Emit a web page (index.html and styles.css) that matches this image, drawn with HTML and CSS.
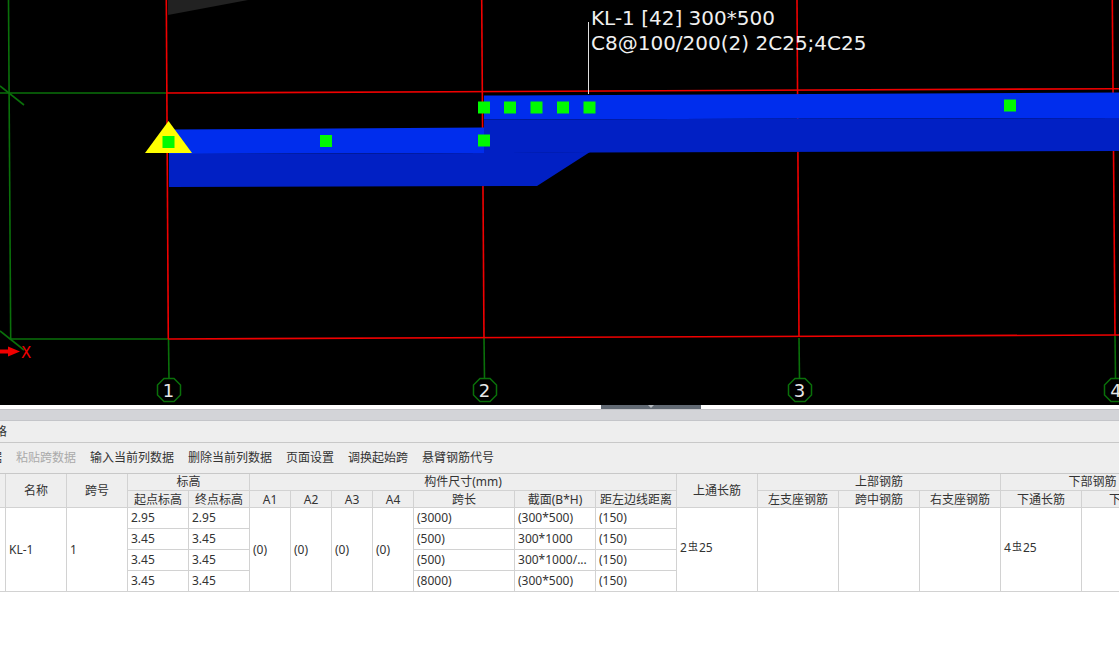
FILE: index.html
```html
<!DOCTYPE html>
<html lang="zh-CN">
<head>
<meta charset="utf-8">
<title>梁平法表格</title>
<link rel="stylesheet" href="styles.css">
</head>
<body>
<div class="page">
  <svg class="canvas" width="1119" height="405" viewBox="0 0 1119 405">
    <polygon class="shade" points="168,0 248,0 168,15"/>
    <g class="green">
      <line x1="8.500" y1="0" x2="10.700" y2="340"/>
      <line x1="0" y1="93" x2="167" y2="93"/>
      <line x1="0" y1="86" x2="24" y2="105"/>
      <line x1="0" y1="331" x2="24" y2="350"/>
      <line x1="10" y1="339" x2="168" y2="339"/>
      <line x1="168.500" y1="339" x2="169" y2="379"/>
      <line x1="484" y1="338" x2="484.500" y2="379"/>
      <line x1="799" y1="338" x2="799.500" y2="379"/>
      <line x1="1115" y1="335" x2="1115.500" y2="379"/>
      <polygon class="bubble" points="164,378.500 174,378.500 180.500,385 180.500,395 174,401.500 164,401.500 157.500,395 157.500,385"/>
      <polygon class="bubble" points="480,378.500 490,378.500 496.500,385 496.500,395 490,401.500 480,401.500 473.500,395 473.500,385"/>
      <polygon class="bubble" points="795,378.500 805,378.500 811.500,385 811.500,395 805,401.500 795,401.500 788.500,395 788.500,385"/>
      <polygon class="bubble" points="1111,378.500 1121,378.500 1127.500,385 1127.500,395 1121,401.500 1111,401.500 1104.500,395 1104.500,385"/>
    </g>
    <g class="red">
      <line x1="166.300" y1="0" x2="168.300" y2="339"/>
      <line x1="481.700" y1="0" x2="484" y2="338"/>
      <line x1="797" y1="0" x2="799" y2="337"/>
      <line x1="1112.300" y1="0" x2="1115" y2="335"/>
      <line x1="167" y1="93" x2="1119" y2="88.700"/>
      <line x1="168" y1="339" x2="1119" y2="335"/>
    </g>
    <polygon class="beam-top" points="169,129.500 484,127.500 484,153 169,154"/>
    <polygon class="beam-side" points="169,154 484,153 590,152 537,186 169,187"/>
    <polygon class="beam-top" points="484,95.500 1119,92.500 1119,118 484,119.500"/>
    <polygon class="beam-side" points="484,119.500 1119,118 1119,151 590,152.500 484,153"/>
    <polygon class="tri" points="168.500,121 192,153 145,153"/>
    <g class="grip">
      <rect x="162.500" y="136" width="12" height="12"/>
      <rect x="320" y="135" width="12" height="12"/>
      <rect x="478" y="134.500" width="12" height="12"/>
      <rect x="478" y="101.500" width="12" height="12"/>
      <rect x="504" y="101.500" width="12" height="12"/>
      <rect x="530.500" y="101.500" width="12" height="12"/>
      <rect x="557" y="101.500" width="12" height="12"/>
      <rect x="583.500" y="101.500" width="12" height="12"/>
      <rect x="1004" y="99.500" width="12" height="12"/>
    </g>
    <line class="leader" x1="588.500" y1="22" x2="588.500" y2="94"/>
    <text class="label" x="591" y="25">KL-1 [42] 300*500</text>
    <text class="label" x="591" y="50">C8@100/200(2) 2C25;4C25</text>
    <g class="axis-arrow">
      <rect x="0" y="349.500" width="10" height="4"/>
      <polygon points="8,346.500 20,351.500 8,356.500"/>
    </g>
    <text class="axis-x" x="21" y="358">X</text>
    <text class="num" x="168.500" y="397">1</text>
    <text class="num" x="484.500" y="397">2</text>
    <text class="num" x="799.500" y="397">3</text>
    <text class="num" x="1116" y="397">4</text>
  </svg>

  <div class="splitter"><div class="handle"><span class="handle-arrow"></span></div></div>

  <div class="panel">
    <div class="band"></div>
    <div class="title"><span class="title-text">表格</span></div>
    <div class="toolbar">
      <span class="tool first">复制跨数据</span>
      <span class="tool off">粘贴跨数据</span>
      <span class="tool">输入当前列数据</span>
      <span class="tool">删除当前列数据</span>
      <span class="tool">页面设置</span>
      <span class="tool">调换起始跨</span>
      <span class="tool">悬臂钢筋代号</span>
    </div>
    <div class="table-wrap">
      <table class="grid">
        <colgroup>
          <col class="c6"><col class="c61"><col class="c61"><col class="c61"><col class="c61">
          <col class="c41"><col class="c41"><col class="c41"><col class="c41">
          <col class="c101"><col class="c81"><col class="c81"><col class="c81">
          <col class="c81"><col class="c81"><col class="c81"><col class="c81"><col class="c103">
        </colgroup>
        <thead>
          <tr>
            <th rowspan="2"></th>
            <th rowspan="2">名称</th>
            <th rowspan="2">跨号</th>
            <th colspan="2">标高</th>
            <th colspan="7">构件尺寸(mm)</th>
            <th rowspan="2">上通长筋</th>
            <th colspan="3">上部钢筋</th>
            <th colspan="2">下部钢筋</th>
          </tr>
          <tr class="sub">
            <th>起点标高</th><th>终点标高</th>
            <th>A1</th><th>A2</th><th>A3</th><th>A4</th>
            <th>跨长</th><th>截面(B*H)</th><th>距左边线距离</th>
            <th>左支座钢筋</th><th>跨中钢筋</th><th>右支座钢筋</th>
            <th>下通长筋</th><th>下部钢筋</th>
          </tr>
        </thead>
        <tbody>
          <tr>
            <td rowspan="4"></td>
            <td rowspan="4">KL-1</td>
            <td rowspan="4">1</td>
            <td>2.95</td><td>2.95</td>
            <td rowspan="4">(0)</td><td rowspan="4">(0)</td><td rowspan="4">(0)</td><td rowspan="4">(0)</td>
            <td>(3000)</td><td>(300*500)</td><td>(150)</td>
            <td rowspan="4" class="bar-cell">2<span class="rebar">虫</span>25</td>
            <td rowspan="4"></td><td rowspan="4"></td><td rowspan="4"></td>
            <td rowspan="4" class="bar-cell">4<span class="rebar">虫</span>25</td>
            <td rowspan="4"></td>
          </tr>
          <tr><td>3.45</td><td>3.45</td><td>(500)</td><td>300*1000</td><td>(150)</td></tr>
          <tr><td>3.45</td><td>3.45</td><td>(500)</td><td>300*1000/...</td><td>(150)</td></tr>
          <tr><td>3.45</td><td>3.45</td><td>(8000)</td><td>(300*500)</td><td>(150)</td></tr>
        </tbody>
      </table>
    </div>
  </div>
</div>
</body>
</html>
```
FILE: styles.css
```css
html, body {
  margin: 0;
  padding: 0;
  background: #fff;
}
.page {
  width: 1119px;
  height: 659px;
  overflow: hidden;
  display: flex;
  flex-direction: column;
  font-family: "Noto Sans", "Noto Sans CJK SC", sans-serif;
  font-size: 12px;
  color: #333;
}
.canvas {
  display: block;
  flex: none;
  background: #000;
}
.canvas line { stroke-width: 1.6; }
.green line { stroke: #0a700a; }
.bubble { fill: none; stroke: #0a700a; stroke-width: 1.5; }
.red line { stroke: #f00000; }
.shade { fill: #222; }
.beam-top { fill: #002ded; }
.beam-side { fill: #0120c4; }
.tri { fill: #ffff00; }
.grip rect { fill: #00fa00; }
.canvas .leader { stroke: #e0e0e0; stroke-width: 1; }
.label {
  fill: #f0f0f0;
  font-family: "DejaVu Sans", sans-serif;
  font-size: 20px;
}
.axis-arrow { fill: #f00000; }
.axis-x {
  fill: #f00000;
  font-family: "DejaVu Sans", sans-serif;
  font-size: 15px;
}
.num {
  fill: #e8e8e8;
  font-family: "DejaVu Sans", sans-serif;
  font-size: 18px;
  text-anchor: middle;
}
.splitter {
  height: 4px;
  flex: none;
  display: flex;
  padding-left: 601px;
  background: #fff;
}
.handle {
  width: 100px;
  height: 4px;
  background: #626a74;
  display: flex;
  justify-content: center;
}
.handle-arrow {
  width: 0;
  height: 0;
  border-left: 3px solid transparent;
  border-right: 3px solid transparent;
  border-top: 3px solid #b5bac0;
}
.panel {
  flex: 1;
  display: flex;
  flex-direction: column;
}
.band {
  height: 12px;
  flex: none;
  box-sizing: border-box;
  background: #d3d4d8;
  border-top: 1px solid #c4c5c9;
  border-bottom: 1px solid #c4c5c9;
}
.title {
  height: 22px;
  flex: none;
  box-sizing: border-box;
  background: #eee;
  border-bottom: 1px solid #c8c8c8;
  line-height: 21px;
  overflow: hidden;
}
.title-text {
  display: block;
  margin-left: -17px;
}
.toolbar {
  height: 31px;
  flex: none;
  box-sizing: border-box;
  padding-bottom: 2px;
  background: #eee;
  border-bottom: 1px solid #c8c8c8;
  display: flex;
  align-items: center;
  gap: 14px;
  white-space: nowrap;
  overflow: hidden;
}
.tool { flex: none; }
.first { margin-left: -58px; }
.off { color: #aaa; }
.table-wrap {
  overflow: hidden;
  flex: none;
}
.grid {
  table-layout: fixed;
  border-collapse: separate;
  border-spacing: 0;
  width: 1185px;
}
.c6 { width: 6px; }
.c41 { width: 41px; }
.c61 { width: 61px; }
.c81 { width: 81px; }
.c101 { width: 101px; }
.c103 { width: 103px; }
.grid th, .grid td {
  box-sizing: border-box;
  border-right: 1px solid #d2d2d2;
  border-bottom: 1px solid #d2d2d2;
  padding: 0;
  white-space: nowrap;
  overflow: hidden;
}
.grid th {
  height: 17px;
  background: #eee;
  font-weight: 400;
  text-align: center;
  line-height: 16px;
}
.grid .sub th {
  padding-top: 2px;
  line-height: 14px;
}
.grid td {
  height: 21px;
  background: #fff;
  padding-left: 3px;
  line-height: 20px;
  text-align: left;
}
.grid .bar-cell { padding-bottom: 3px; }
.rebar {
  font-size: 10px;
  margin: 0 1px;
  position: relative;
  top: -2px;
}
```
